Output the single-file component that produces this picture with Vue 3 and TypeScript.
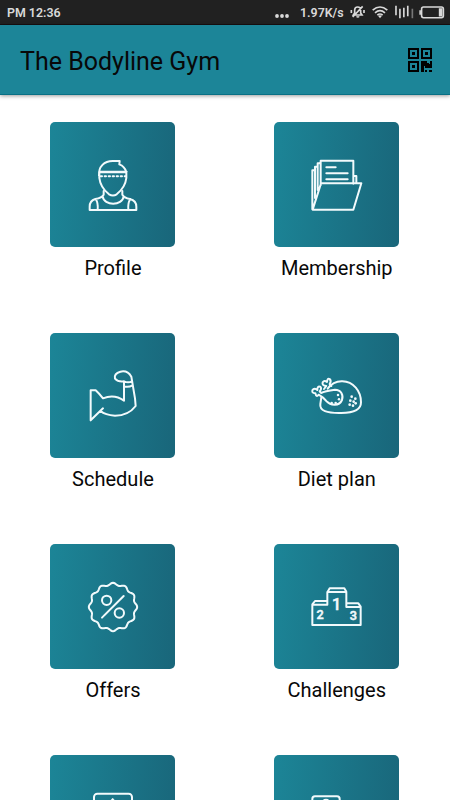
<script setup lang="ts">
type IconName = 'profile' | 'membership' | 'schedule' | 'diet' | 'offers' | 'challenges' | 'workout' | 'card'

interface Tile {
  icon: IconName
  label: string
  viewBox: string
}

const tiles: Tile[] = [
  { icon: 'profile', label: 'Profile', viewBox: '0 5 198 198' },
  { icon: 'membership', label: 'Membership', viewBox: '0 5 198 198' },
  { icon: 'schedule', label: 'Schedule', viewBox: '0 3 198 198' },
  { icon: 'diet', label: 'Diet plan', viewBox: '0 3 198 198' },
  { icon: 'offers', label: 'Offers', viewBox: '0 3 198 198' },
  { icon: 'challenges', label: 'Challenges', viewBox: '0 3 198 198' },
  { icon: 'workout', label: '', viewBox: '0 -1 198 198' },
  { icon: 'card', label: '', viewBox: '0 -1 198 198' },
]

// Scalloped outline of the discount badge: twelve lobes round (99, 102).
const badge: string = (() => {
  const points: string[] = []
  for (let i = 0; i < 144; i++) {
    const a = (i / 144) * Math.PI * 2
    const r = 69 + 3.5 * Math.cos(12 * a)
    points.push(`${(99 + r * Math.cos(a)).toFixed(1)} ${(102 + r * Math.sin(a)).toFixed(1)}`)
  }
  return `M${points.join('L')}Z`
})()
</script>

<template>
  <div class="screen">
    <div class="status">
      <span class="clock">PM 12:36</span>
      <div class="indicators">
        <svg class="dots" viewBox="0 0 14 4"><circle cx="2" cy="2" r="1.9" /><circle cx="7" cy="2" r="1.9" /><circle cx="12" cy="2" r="1.9" /></svg>
        <span class="speed">1.97K/s</span>
        <svg class="bell" viewBox="0 0 48 42">
          <path d="M10 30h26l-4-6V15a9 9 0 0 0-18 0v9zM20 34a4 4 0 0 0 7 0M38 4L8 36M4 15v9M42 15v9" />
        </svg>
        <svg class="wifi" viewBox="0 0 48 38">
          <path d="M2 12Q24-7 46 12M9 20Q24 7 39 20M16 27Q24 20 32 27" />
          <path class="solid" d="M18 29Q24 25 30 29L24 36z" />
        </svg>
        <svg class="signal" viewBox="0 0 58 42">
          <path d="M3 2v29M15 11v29M27 8v29M39 2v32" />
          <path class="faint" d="M53 11v29" />
        </svg>
        <svg class="battery" viewBox="0 0 78 40">
          <rect x="7" y="3" width="67" height="33" rx="6" />
          <path class="solid" d="M0 13h5v14H0zM60 7h11v25H60z" />
        </svg>
      </div>
    </div>

    <header class="bar">
      <h1>The Bodyline Gym</h1>
      <svg class="qr" viewBox="0 0 72 72">
        <path fill-rule="evenodd" d="M0 0h33v33H0zM6 6v21h21V6zM39 0h33v33H39zM45 6v21h21V6zM0 39h33v33H0zM6 45v21h21V45z" />
        <path d="M12 12h9v9h-9zM51 12h9v9h-9zM12 51h9v9h-9zM39 39h18v6h6v3h3v-9h6v21H51v-6h-3v18h-9zM51 66h6v6h-6zM63 66h9v6h-9z" />
      </svg>
    </header>

    <main class="grid">
      <div v-for="tile in tiles" :key="tile.icon" class="item">
        <div class="tile">
          <svg class="icon" :viewBox="tile.viewBox">
            <g v-if="tile.icon === 'profile'">
              <path d="M57 76C55 48 73 32 98 32H119L118 42Q134 48 139 65V83Q136 111 110 132Q99 139 87 132Q61 111 58 83V64H140" />
              <path stroke-dasharray="6 3" d="M59 66H139" />
              <path stroke-dasharray="4 8" d="M62 78H138" />
              <path d="M71 122V133Q66 142 46 146Q29 151 29 169V179H169V169Q169 151 150 146Q132 142 127 133V122M68 138C72 168 127 168 131 138M47 146Q55 158 53 178M151 146Q143 158 145 178" />
            </g>
            <g v-else-if="tile.icon === 'membership'">
              <path d="M50 105V31H148V100M47 39H41V119M41 49H33V143M33 60H25V177M148 77H157V99M67 51H95M67 69H131M67 87H131M51 99H172L148 178H26Z" />
            </g>
            <g v-else-if="tile.icon === 'schedule'">
              <path d="M132 116V58Q115 61 105 50Q101 34 121 29Q143 24 154 44L165 109L167 132Q145 161 105 161Q75 159 62 147M69 139L32 175V85H47Q57 94 69 109Q103 95 132 116M132 58Q145 64 155 58M132 73Q145 77 158 70" />
            </g>
            <g v-else-if="tile.icon === 'diet'">
              <path d="M71 80Q88 57 115 58C148 59 171 87 171 121C171 143 152 153 112 153C68 154 46 146 49 126L52 106" />
              <path d="M51 93Q62 87 93 83C111 83 119 99 114 114C105 135 78 129 68 118Q57 105 44 98Q37 107 34 94Q21 93 26 83Q33 77 40 84Q40 72 48 74Q55 79 47 88Z" />
              <path d="M60 81L67 72Q53 71 56 61Q61 54 69 60Q70 47 77 51Q83 57 77 66L82 72" />
              <g class="spots">
                <circle cx="102" cy="99" r="3.8" /><circle cx="105" cy="112" r="3.8" /><circle cx="95" cy="123" r="3.8" /><circle cx="83" cy="123" r="3.8" />
                <circle cx="143" cy="104" r="4" /><circle cx="154" cy="110" r="4" /><circle cx="139" cy="116" r="4" /><circle cx="149" cy="119" r="4" /><circle cx="137" cy="128" r="4" /><circle cx="147" cy="131" r="4" /><circle cx="155" cy="124" r="4" />
              </g>
            </g>
            <g v-else-if="tile.icon === 'offers'">
              <path :d="badge" />
              <circle cx="80" cy="82" r="14" />
              <circle cx="118" cy="120" r="14" />
              <path d="M131 69L66 134" />
            </g>
            <g v-else-if="tile.icon === 'challenges'">
              <path d="M25 95H70V57H127V102H170V156H25ZM25 94L33 84H69M71 56L77 46H121L127 56M128 91H163L170 101" />
              <text x="48" y="138">2</text>
              <text class="first" x="98" y="111">1</text>
              <text x="148" y="142">3</text>
            </g>
            <g v-else-if="tile.icon === 'workout'">
              <rect x="42" y="25" width="114" height="130" rx="10" />
              <path d="M98 42V110M80 62L98 42L116 62" />
            </g>
            <g v-else>
              <rect x="25" y="33" width="82" height="130" rx="8" />
              <circle cx="66" cy="51" r="8" />
            </g>
          </svg>
        </div>
        <div class="label">{{ tile.label }}</div>
      </div>
    </main>
  </div>
</template>

<style>
body {
  margin: 0;
  overflow: hidden;
}
</style>

<style scoped>
.screen {
  width: 450px;
  height: 800px;
  overflow: hidden;
  display: flex;
  flex-direction: column;
  background: #fff;
  color: #080808;
  font-family: Roboto, "Liberation Sans", sans-serif;
}

.status {
  flex: none;
  height: 25px;
  box-sizing: border-box;
  display: flex;
  align-items: center;
  justify-content: space-between;
  padding: 0 5px 0 7px;
  background: #212121;
  border-bottom: 1px solid #180f10;
  color: #d9d9d9;
  font-size: 12.4px;
  font-weight: 600;
  line-height: 24px;
}

.clock {
  padding-top: 1px;
}

.indicators {
  display: flex;
  align-items: center;
  height: 24px;
}

.indicators svg {
  fill: none;
  stroke: #d9d9d9;
  stroke-width: 5;
}

.indicators .dots {
  width: 14px;
  height: 4px;
  margin-top: 7px;
  fill: #d9d9d9;
  stroke: none;
}

.speed {
  width: 44px;
  padding-top: 1px;
  margin-left: 11px;
  white-space: nowrap;
}

.bell {
  width: 16px;
  height: 14px;
  margin-left: 6px;
}

.wifi {
  width: 16px;
  height: 13px;
  margin-left: 6px;
}

.signal {
  width: 19px;
  height: 14px;
  margin-left: 7px;
}

.battery {
  width: 26px;
  height: 13px;
  margin-left: 5px;
}

.indicators .solid {
  fill: #d9d9d9;
  stroke: none;
}

.indicators .faint {
  stroke: #777;
}

.bar {
  flex: none;
  height: 70px;
  box-sizing: border-box;
  display: flex;
  align-items: center;
  justify-content: space-between;
  padding: 0 18px 0 20px;
  background: #1c8598;
  border-bottom: 1px solid #087085;
  box-shadow: 0 1px 4px rgba(0, 0, 0, 0.4);
}

h1 {
  margin: 4px 0 0;
  font-size: 25px;
  font-weight: 400;
  line-height: 30px;
}

.qr {
  width: 24px;
  height: 24px;
  fill: #000;
}

.grid {
  display: grid;
  grid-template-columns: 223.8px 223.8px;
  grid-auto-rows: 211px;
  padding: 27.4px 1.1px 0;
}

.item {
  display: flex;
  flex-direction: column;
  align-items: center;
}

.tile {
  width: 125px;
  height: 125px;
  display: flex;
  align-items: center;
  justify-content: center;
  border-radius: 5px;
  background: linear-gradient(95deg, #1c8597, #19667a);
}

.icon {
  width: 66px;
  height: 66px;
  fill: none;
  stroke: #f2fafc;
  stroke-width: 6;
  stroke-linecap: round;
  stroke-linejoin: round;
}

.spots {
  fill: #f2fafc;
  stroke: none;
}

.icon text {
  fill: #f2fafc;
  stroke: #f2fafc;
  stroke-width: 1.5;
  font-size: 38px;
  font-weight: 500;
  text-anchor: middle;
}

.icon .first {
  font-size: 48px;
}

.label {
  margin-top: 9px;
  font-size: 20px;
  line-height: 24px;
  white-space: nowrap;
}
</style>
